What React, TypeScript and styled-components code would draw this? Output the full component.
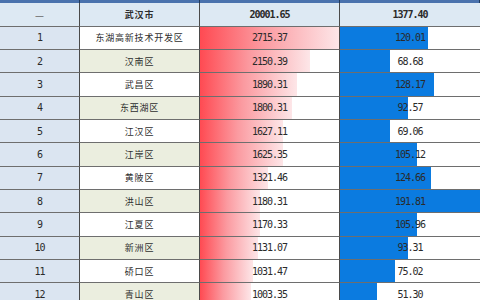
import React from "react";
import styled, { createGlobalStyle } from "styled-components";

const GlobalStyle = createGlobalStyle`
  html, body {
    margin: 0;
    padding: 0;
    background: #ffffff;
  }
  * {
    box-sizing: border-box;
  }
`;

const ROW_H = "calc(70px / 3)";

const Table = styled.div`
  display: grid;
  grid-template-columns: 80px 120px 140px 140px;
  grid-template-rows: calc(10px / 3);
  grid-auto-rows: ${ROW_H};
  width: 480px;
  height: 300px;
  overflow: hidden;
  font-family: "DejaVu Sans Mono", "Noto Sans CJK SC", monospace;
  color: #2a2a2a;
`;

const HeadCell = styled.div`
  background: #4a72ad;
  border-right: 1px solid #1f3a5e;
  &:last-child {
    border-right: none;
  }
`;

const Cell = styled.div<{ $bg?: string; $last?: boolean }>`
  display: flex;
  align-items: center;
  justify-content: center;
  position: relative;
  background: ${(p) => p.$bg || "#ffffff"};
  border-right: ${(p) => (p.$last ? "none" : "1px solid #4a4a4a")};
  border-bottom: 1px solid #6e6e6e;
  overflow: hidden;
  white-space: nowrap;
`;

const Num = styled.span<{ $bold?: boolean }>`
  position: relative;
  z-index: 1;
  font-family: "DejaVu Sans Mono", monospace;
  font-size: 10px;
  letter-spacing: -1px;
  font-weight: ${(p) => (p.$bold ? 700 : 400)};
`;

const Name = styled.span<{ $bold?: boolean }>`
  font-family: "Noto Sans CJK SC", sans-serif;
  font-size: 9px;
  letter-spacing: 0.8px;
  font-weight: ${(p) => (p.$bold ? 700 : 400)};
  color: #2e2e2e;
`;

const Dash = styled.span`
  font-family: "Noto Sans CJK SC", sans-serif;
  font-size: 10px;
  color: #6a6a6a;
`;

const Bar = styled.div<{ $kind: "red" | "blue" }>`
  position: absolute;
  left: 0;
  top: 0;
  bottom: 0;
  background: ${(p) =>
    p.$kind === "red"
      ? "linear-gradient(90deg, #ff4a52 0%, #fb9aa0 45%, #fde6e8 100%)"
      : "#0b7be0"};
`;

type Row = { no: number; name: string; gdp: number; growth: number };

const rows: Row[] = [
  { no: 1, name: "东湖高新技术开发区", gdp: 2715.37, growth: 120.01 },
  { no: 2, name: "汉南区", gdp: 2150.39, growth: 68.68 },
  { no: 3, name: "武昌区", gdp: 1890.31, growth: 128.17 },
  { no: 4, name: "东西湖区", gdp: 1800.31, growth: 92.57 },
  { no: 5, name: "江汉区", gdp: 1627.11, growth: 69.06 },
  { no: 6, name: "江岸区", gdp: 1625.35, growth: 105.12 },
  { no: 7, name: "黄陂区", gdp: 1321.46, growth: 124.66 },
  { no: 8, name: "洪山区", gdp: 1180.31, growth: 191.81 },
  { no: 9, name: "江夏区", gdp: 1170.33, growth: 105.96 },
  { no: 10, name: "新洲区", gdp: 1131.07, growth: 93.31 },
  { no: 11, name: "硚口区", gdp: 1031.47, growth: 75.02 },
  { no: 12, name: "青山区", gdp: 1003.35, growth: 51.3 },
];

const maxGdp = Math.max(...rows.map((r) => r.gdp));
const maxGrowth = Math.max(...rows.map((r) => r.growth));

const TOTAL_BG = "#dde9f3";
const INDEX_BG = "#dbe5f1";
const ALT_BG = "#ebeedf";

export default function App() {
  return (
    <>
      <GlobalStyle />
      <Table>
        <HeadCell />
        <HeadCell />
        <HeadCell />
        <HeadCell />

        <Cell $bg={TOTAL_BG}>
          <Dash>—</Dash>
        </Cell>
        <Cell $bg={TOTAL_BG}>
          <Name $bold>武汉市</Name>
        </Cell>
        <Cell $bg={TOTAL_BG}>
          <Num $bold>20001.65</Num>
        </Cell>
        <Cell $bg={TOTAL_BG} $last>
          <Num $bold>1377.40</Num>
        </Cell>

        {rows.map((r) => (
          <React.Fragment key={r.no}>
            <Cell $bg={INDEX_BG}>
              <Num>{r.no}</Num>
            </Cell>
            <Cell $bg={r.no % 2 === 0 ? ALT_BG : "#ffffff"}>
              <Name>{r.name}</Name>
            </Cell>
            <Cell>
              <Bar $kind="red" style={{ width: `${(r.gdp / maxGdp) * 100}%` }} />
              <Num>{r.gdp.toFixed(2)}</Num>
            </Cell>
            <Cell $last>
              <Bar
                $kind="blue"
                style={{ width: `${(r.growth / maxGrowth) * 100}%` }}
              />
              <Num>{r.growth.toFixed(2)}</Num>
            </Cell>
          </React.Fragment>
        ))}
      </Table>
    </>
  );
}
